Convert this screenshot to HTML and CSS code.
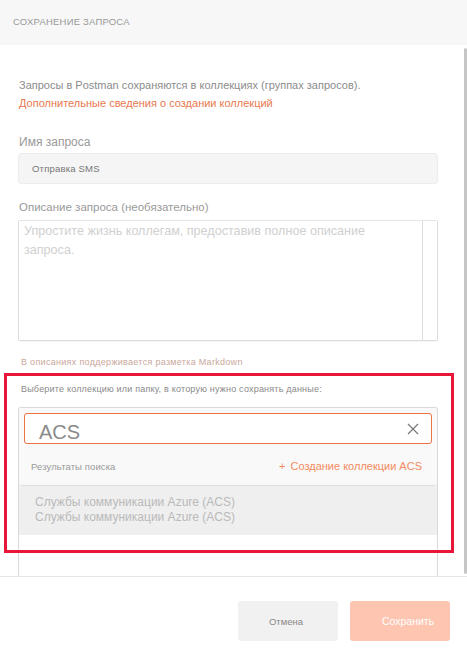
FILE: index.html
```html
<!DOCTYPE html>
<html lang="ru">
<head>
<meta charset="utf-8">
<title>Сохранение запроса</title>
<link rel="stylesheet" href="styles.css">
</head>
<body>
<div class="dialog">
  <header class="header">
    <h1 class="title">СОХРАНЕНИЕ ЗАПРОСА</h1>
  </header>
  <div class="body">
    <main class="content">
      <p class="intro">Запросы в Postman сохраняются в коллекциях (группах запросов).</p>
      <a class="link" href="#">Дополнительные сведения о создании коллекций</a>

      <label class="label name-label">Имя запроса</label>
      <div class="input">Отправка SMS</div>

      <label class="label desc-label">Описание запроса (необязательно)</label>
      <div class="textarea">
        <div class="textarea-text">Упростите жизнь коллегам, предоставив полное описание запроса.</div>
        <div class="textarea-track"></div>
      </div>

      <p class="note">В описаниях поддерживается разметка Markdown</p>

      <p class="select-label">Выберите коллекцию или папку, в которую нужно сохранять данные:</p>
      <div class="collections">
        <div class="collections-top">
          <div class="search">
            <span class="search-value">ACS</span>
            <svg class="clear" width="12" height="12" viewBox="0 0 12 12"><path d="M1 1L11 11M11 1L1 11" stroke="#777" stroke-width="1.2" fill="none"/></svg>
          </div>
          <div class="results-head">
            <span class="results-title">Результаты поиска</span>
            <span class="create"><span class="plus">+</span> Создание коллекции ACS</span>
          </div>
        </div>
        <div class="result-row">
          <div>Службы коммуникации Azure (ACS)</div>
          <div>Службы коммуникации Azure (ACS)</div>
        </div>
      </div>
      <div class="highlight"></div>
    </main>
    <div class="scrollbar"></div>
  </div>
  <footer class="footer">
    <button class="btn btn-cancel">Отмена</button>
    <button class="btn btn-save">Сохранить</button>
  </footer>
</div>
</body>
</html>
```

FILE: styles.css
```css
* { box-sizing: border-box; }
html, body { margin: 0; padding: 0; background: #fff; }
body {
  font-family: "Liberation Sans", Arial, sans-serif;
  width: 467px;
  height: 662px;
  overflow: hidden;
}
.dialog { display: flex; flex-direction: column; height: 662px; }
.header {
  height: 45px;
  background: #f7f7f7;
  padding-left: 13px;
  display: flex;
  align-items: center;
  flex-shrink: 0;
}
.title {
  margin: 0 0 2px;
  font-size: 9.5px;
  font-weight: normal;
  color: #999;
  letter-spacing: 0.2px;
}
.body {
  display: flex;
  height: 531px;
  overflow: hidden;
  flex-shrink: 0;
}
.content {
  position: relative;
  flex: 1;
  padding: 31px 26px 0 18px;
  display: flex;
  flex-direction: column;
  align-items: stretch;
}
.scrollbar {
  width: 3px;
  margin-top: 3px;
  height: 526px;
  background: #c6c6c6;
  border-radius: 2px;
  flex-shrink: 0;
}
.intro {
  margin: 0;
  padding-left: 1px;
  font-size: 11px;
  line-height: 18px;
  color: #8c8c8c;
}
.link {
  display: block;
  padding-left: 1px;
  font-size: 11px;
  line-height: 18px;
  color: #e8784f;
  text-decoration: none;
}
.label {
  display: block;
  padding-left: 1px;
  font-size: 12px;
  line-height: 16px;
  color: #9a9a9a;
}
.name-label { margin-top: 22px; }
.input {
  margin-top: 3px;
  height: 31px;
  background: #f5f5f5;
  border: 1px solid #ededed;
  border-radius: 3px;
  padding-left: 13px;
  display: flex;
  align-items: center;
  font-size: 9.5px;
  color: #777;
  letter-spacing: 0.2px;
}
.desc-label { margin-top: 15px; font-size: 11.5px; }
.textarea {
  margin-top: 5px;
  height: 121px;
  border: 1px solid #dcdcdc;
  border-top-color: #e6e6e6;
  border-radius: 2px;
  display: flex;
  box-shadow: 0 1px 1px rgba(0,0,0,0.04);
}
.textarea-text {
  flex: 1;
  padding: 1px 40px 0 5px;
  font-size: 12.6px;
  line-height: 19px;
  color: #d0d0d0;
}
.textarea-track {
  width: 15px;
  border-left: 1px solid #dcdcdc;
}
.note {
  margin: 15px 0 0;
  padding-left: 3px;
  font-size: 9px;
  line-height: 12px;
  color: #c9a89d;
  letter-spacing: 0.3px;
}
.select-label {
  margin: 15px 0 0;
  padding-left: 3px;
  font-size: 9px;
  line-height: 12px;
  color: #8a8a8a;
  letter-spacing: 0.2px;
}
.collections {
  margin-top: 12px;
  flex: 1;
  border: 1px solid #dadada;
  border-bottom: none;
  border-radius: 3px 3px 0 0;
  display: flex;
  flex-direction: column;
}
.collections-top {
  background: #f9f9f9;
  padding: 5px 5px 0;
  border-bottom: 1px solid #dcdcdc;
  border-radius: 3px;
}
.search {
  height: 31px;
  background: #fff;
  border: 1px solid #ec7143;
  border-radius: 3px;
  display: flex;
  align-items: center;
  justify-content: space-between;
  padding: 0 12px 0 14px;
}
.search-value {
  font-size: 20px;
  color: #8a8a8a;
  line-height: 1;
  margin-top: 6px;
}
.clear { margin-top: 1px; }
.results-head {
  height: 41px;
  display: flex;
  justify-content: space-between;
  align-items: center;
  padding: 3px 10px 0 7px;
}
.results-title {
  font-size: 9.5px;
  color: #9a9a9a;
  letter-spacing: 0.1px;
}
.create {
  font-size: 11px;
  color: #f38a5f;
}
.plus { margin-right: 2px; }
.result-row {
  background: #efefef;
  height: 49px;
  padding: 9px 0 0 16px;
  font-size: 12px;
  line-height: 15px;
  color: #bababa;
}
.highlight {
  position: absolute;
  left: 4px;
  top: 328px;
  width: 450px;
  height: 180px;
  border: 3px solid #e8173a;
  pointer-events: none;
}
.footer {
  flex: 1;
  border-top: 1px solid #e6e6e6;
  display: flex;
  justify-content: flex-end;
  align-items: flex-start;
  gap: 12px;
  padding: 24px 17px 0 0;
}
.btn {
  width: 100px;
  height: 40px;
  border: none;
  border-radius: 3px;
  font-family: "Liberation Sans", Arial, sans-serif;
  font-size: 9.5px;
  cursor: pointer;
}
.btn-cancel { background: #f1f1f1; color: #888; padding: 0 4px 0 0; }
.btn-save { background: #fec5b1; color: #fff; font-size: 10.5px; padding: 0 0 0 16px; }
```
